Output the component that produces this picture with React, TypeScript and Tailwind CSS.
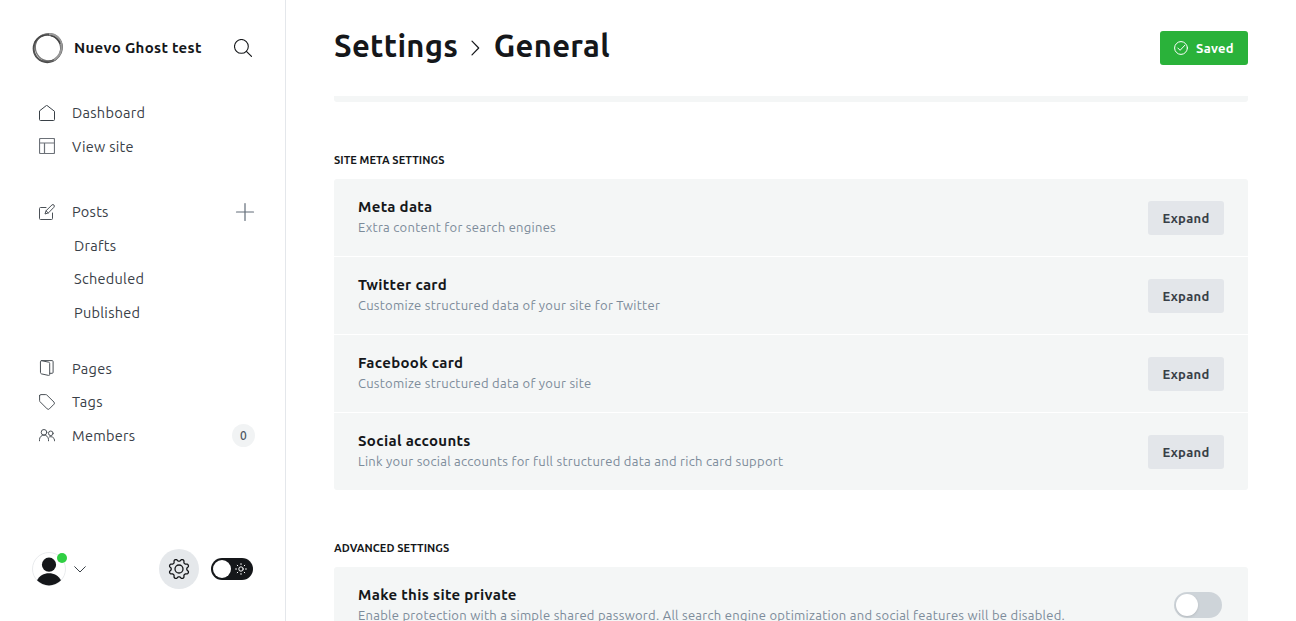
import type { ReactNode } from 'react';

type IconProps = { children: ReactNode; className?: string; box?: string };

function Icon({ children, className = 'size-4', box = '0 0 16 16' }: IconProps) {
  return (
    <svg
      viewBox={box}
      className={`shrink-0 ${className}`}
      fill="none"
      stroke="currentColor"
      strokeWidth="1"
      strokeLinecap="round"
      strokeLinejoin="round"
    >
      {children}
    </svg>
  );
}

const icons = {
  home: (
    <Icon className="size-4 text-[#394047]">
      <path d="M.5 6.3v8.2a1 1 0 0 0 1 1h13a1 1 0 0 0 1-1V6.3L8 .5Z" />
    </Icon>
  ),
  layout: (
    <Icon className="size-4 text-[#6c7178]">
      <rect x=".5" y=".5" width="15" height="15" rx="1" strokeWidth="1.200" />
      <path d="M.5 5h15M5.5 5v10.5" strokeWidth="1.200" />
    </Icon>
  ),
  edit: (
    <Icon className="size-4 text-[#4b5157]">
      <path d="M13.5 9v5.500a1 1 0 0 1-1 1h-11a1 1 0 0 1-1-1v-10a1 1 0 0 1 1-1H7" />
      <path d="M9.200 8.900 6 10l1-3.200L13 .9a1.500 1.500 0 0 1 2.100 2.100ZM7 6.800l2.200 2.100" />
    </Icon>
  ),
  pages: (
    <Icon className="size-4 text-[#4b5157]">
      <path d="M1.500 1.500a1 1 0 0 1 1.200-.8l7 1.500a1.300 1.300 0 0 1 1 1.200v11a1 1 0 0 1-1.200 1l-7-1.500a1.300 1.300 0 0 1-1-1.200Z" />
      <path d="M2.300.6h10.800a1 1 0 0 1 1 1v10.700a1 1 0 0 1-1 1h-2.300" />
    </Icon>
  ),
  tag: (
    <Icon className="size-4 text-[#4b5157]">
      <path d="M.6 1.700v5a1.500 1.500 0 0 0 .4 1l7.200 7.200a1.500 1.500 0 0 0 2.100 0l4.700-4.700a1.500 1.500 0 0 0 0-2.100L7.800 1a1.500 1.500 0 0 0-1-.4h-5A1.100 1.100 0 0 0 .6 1.700Z" />
    </Icon>
  ),
  members: (
    <Icon className="size-4 text-[#4b5157]">
      <circle cx="5" cy="5.300" r="2.800" />
      <path d="M.5 13.800v-1.200a4.500 4.500 0 0 1 9 0v1.200" />
      <circle cx="11.800" cy="6.300" r="2.300" />
      <path d="M10.500 9.800a3.700 3.700 0 0 1 5 3.300v.7" />
    </Icon>
  ),
};

// Outline of an eight-toothed cog centred on (11, 11).
const cogOutline = Array.from({ length: 120 }, (_, i) => {
  const angle = (i / 120) * 2 * Math.PI;
  const wave = -Math.cos(8 * angle);
  const radius = 8.9 + 1.2 * Math.tanh(1.6 * wave);
  return `${(11 + radius * Math.cos(angle)).toFixed(2)},${(11 + radius * Math.sin(angle)).toFixed(2)}`;
}).join(' ');

function NavItem({ icon, children, extra }: { icon: ReactNode; children: ReactNode; extra?: ReactNode }) {
  return (
    <li className="flex h-[33.500px] items-center pl-[39px] pr-[30px]">
      {icon}
      <span className="ml-[17px] pt-px leading-[22px]">{children}</span>
      {extra && <span className="ml-auto flex items-center">{extra}</span>}
    </li>
  );
}

function SubItem({ children }: { children: ReactNode }) {
  return <li className="flex h-[33.500px] items-center pl-[74px] pt-px leading-[22px]">{children}</li>;
}

function Logo() {
  return (
    <svg viewBox="0 0 32 32" className="size-8 shrink-0" fill="none">
      <circle cx="15.300" cy="16.500" r="13.700" stroke="#4a4a4a" strokeWidth="1.900" />
      <ellipse cx="16.800" cy="15.300" rx="13.500" ry="13.700" stroke="#777" strokeWidth="1.300" />
      <ellipse cx="16" cy="15.800" rx="14.500" ry="13.200" stroke="#555" strokeWidth="1" transform="rotate(-35 16 16)" />
      <path d="M17 2.300c6-.8 12 4.200 12.300 10.700M29.400 12c1.100 7-2.400 13.200-7.400 15.900" stroke="#999" strokeWidth="2.200" />
      <path d="M3 10C5 6 9 3.400 13 3.200M19 3.800c4.500 1 8 4.200 9.200 8" stroke="#444" strokeWidth="1.100" />
    </svg>
  );
}

function Sidebar() {
  return (
    <nav className="flex w-[286px] shrink-0 flex-col border-r border-[#e4e7eb] text-[14.500px] tracking-[0.280px] text-[#394047]">
      <div className="flex h-24 items-center pl-8 pr-[33px]">
        <Logo />
        <span className="ml-[10px] text-[15px] font-bold tracking-[0.310px] text-[#15171a]">Nuevo Ghost test</span>
        <Icon className="ml-auto size-[18px] text-[#15171a]" box="0 0 18 18">
          <circle cx="7.400" cy="7.400" r="6.900" strokeWidth="1.100" />
          <path d="m12.400 12.400 5.100 5" strokeWidth="1.200" />
        </Icon>
      </div>
      <ul>
        <NavItem icon={icons.home}>Dashboard</NavItem>
        <NavItem icon={icons.layout}>View site</NavItem>
      </ul>
      <ul className="mt-8">
        <NavItem
          icon={icons.edit}
          extra={
            <Icon className="size-5 text-[#626d79]" box="0 0 20 20">
              <path d="M10 1.500v17M1.500 10h17" strokeWidth="1.200" />
            </Icon>
          }
        >
          Posts
        </NavItem>
        <SubItem>Drafts</SubItem>
        <SubItem>Scheduled</SubItem>
        <SubItem>Published</SubItem>
      </ul>
      <ul className="mt-[22.500px]">
        <NavItem icon={icons.pages}>Pages</NavItem>
        <NavItem icon={icons.tag}>Tags</NavItem>
        <NavItem
          icon={icons.members}
          extra={
            <span className="flex size-[23px] items-center justify-center rounded-full bg-[#f1f3f4] pt-px text-[12px] font-medium text-[#4b565f]">
              0
            </span>
          }
        >
          Members
        </NavItem>
      </ul>
      <div className="mb-8 mt-auto flex h-10 items-center pl-8 pr-8">
        <div className="relative size-[34px]">
          <svg viewBox="0 0 34 34" className="size-[34px]">
            <circle cx="17" cy="17" r="16.500" fill="#fff" stroke="#e9ebed" />
            <circle cx="17" cy="12.700" r="7.100" fill="#15171a" />
            <path d="M5 28.300c2.500-4.600 6.800-7 12-7s9.500 2.400 12 7a16.600 16.600 0 0 1-24 0Z" fill="#15171a" />
          </svg>
          <span className="absolute left-[25px] top-px size-[10px] rounded-full bg-[#30cf43]" />
        </div>
        <Icon className="ml-2 h-3 w-3 text-[#394047]" box="0 0 12 12">
          <path d="m.700 3.700 5.300 5.300 5.300-5.300" />
        </Icon>
        <button className="ml-auto flex size-10 items-center justify-center rounded-full bg-[#e5e8eb] text-[#15171a]">
          <Icon className="size-[22px]" box="0 0 22 22">
            <polygon points={cogOutline} strokeWidth="1.300" />
            <circle cx="11" cy="11" r="4" strokeWidth="1.300" />
          </Icon>
        </button>
        <button className="ml-3 flex h-[22px] w-[42px] items-center rounded-full bg-[#15171a] pl-[2px] pr-[6px]">
          <span className="size-[18px] rounded-full bg-white" />
          <Icon className="ml-auto size-3 text-white" box="0 0 12 12">
            <circle cx="6" cy="6" r="2.200" />
            <path d="M6 .6v.9M6 10.500v.9M.6 6h.9M10.500 6h.9M2.200 2.200l.6.6M9.200 9.200l.6.6M2.200 9.800l.6-.6M9.200 2.800l.6-.6" />
          </Icon>
        </button>
      </div>
    </nav>
  );
}

function Setting({ title, text, action }: { title: string; text: string; action: ReactNode }) {
  return (
    <div className="flex h-[77px] shrink-0 items-center justify-between bg-[#f4f6f6] px-6">
      <div className="pb-px">
        <h4 className="text-[15px] font-bold leading-[20px] tracking-[0.330px] text-[#15171a]">{title}</h4>
        <p className="whitespace-nowrap text-[13px] leading-[21px] tracking-[0.274px] text-[#7c8b9a]">{text}</p>
      </div>
      {action}
    </div>
  );
}

function Expand() {
  return (
    <button className="flex h-[34px] w-[76px] items-center justify-center rounded-[3px] bg-[#e3e6ea] pt-[2px] text-[13px] font-semibold tracking-[0.300px] text-[#394047]">
      Expand
    </button>
  );
}

function GroupHeading({ children }: { children: ReactNode }) {
  return (
    <h3 className="mt-[50px] shrink-0 text-[11px] font-semibold leading-4 tracking-[0.060px] text-[#15171a]">{children}</h3>
  );
}

const metaSettings = [
  { title: 'Meta data', text: 'Extra content for search engines' },
  { title: 'Twitter card', text: 'Customize structured data of your site for Twitter' },
  { title: 'Facebook card', text: 'Customize structured data of your site' },
  { title: 'Social accounts', text: 'Link your social accounts for full structured data and rich card support' },
];

export default function App() {
  return (
    <div className="flex h-[621px] w-[1296px] overflow-hidden bg-white font-['Ubuntu','Noto_Sans',sans-serif]">
      <Sidebar />
      <main className="flex flex-1 flex-col overflow-hidden px-12">
        <header className="flex h-24 shrink-0 items-center justify-between">
          <h2 className="flex items-center pb-[5px] text-[31px] font-bold leading-none tracking-[0.3px] text-[#15171a]">
            <span className="w-[124px] whitespace-nowrap">Settings</span>
            <Icon className="ml-3 mr-[11.800px] mt-[5px] h-4 w-3" box="0 0 12 16">
              <path d="m2 1.200 6.700 6.800L2 14.800" strokeWidth="1.200" />
            </Icon>
            <span>General</span>
          </h2>
          <button className="flex h-[34px] w-[88px] items-center rounded-[3px] bg-[#2ab23a] pl-[14px] text-white">
            <Icon className="size-[14px]" box="0 0 14 14">
              <circle cx="7" cy="7" r="6.400" />
              <path d="m3.800 7 2.300 2.300L10.800 4.300" />
            </Icon>
            <span className="ml-2 pt-[2px] text-[13px] font-semibold tracking-[0.250px]">Saved</span>
          </button>
        </header>
        <div className="h-[6px] shrink-0 rounded-b-[3px] bg-[#f4f6f6]" />
        <GroupHeading>SITE META SETTINGS</GroupHeading>
        <section className="mt-[11px] flex shrink-0 flex-col gap-px overflow-hidden rounded-[3px]">
          {metaSettings.map((s) => (
            <Setting key={s.title} {...s} action={<Expand />} />
          ))}
        </section>
        <GroupHeading>ADVANCED SETTINGS</GroupHeading>
        <section className="mt-[11px] flex shrink-0 flex-col overflow-hidden rounded-[3px]">
          <Setting
            title="Make this site private"
            text="Enable protection with a simple shared password. All search engine optimization and social features will be disabled."
            action={
              <button className="mb-px mr-[2px] flex h-[26px] w-12 items-center rounded-full bg-[#ced4d9] pl-[2px]">
                <span className="size-[22px] rounded-full bg-white shadow-sm" />
              </button>
            }
          />
        </section>
      </main>
    </div>
  );
}
